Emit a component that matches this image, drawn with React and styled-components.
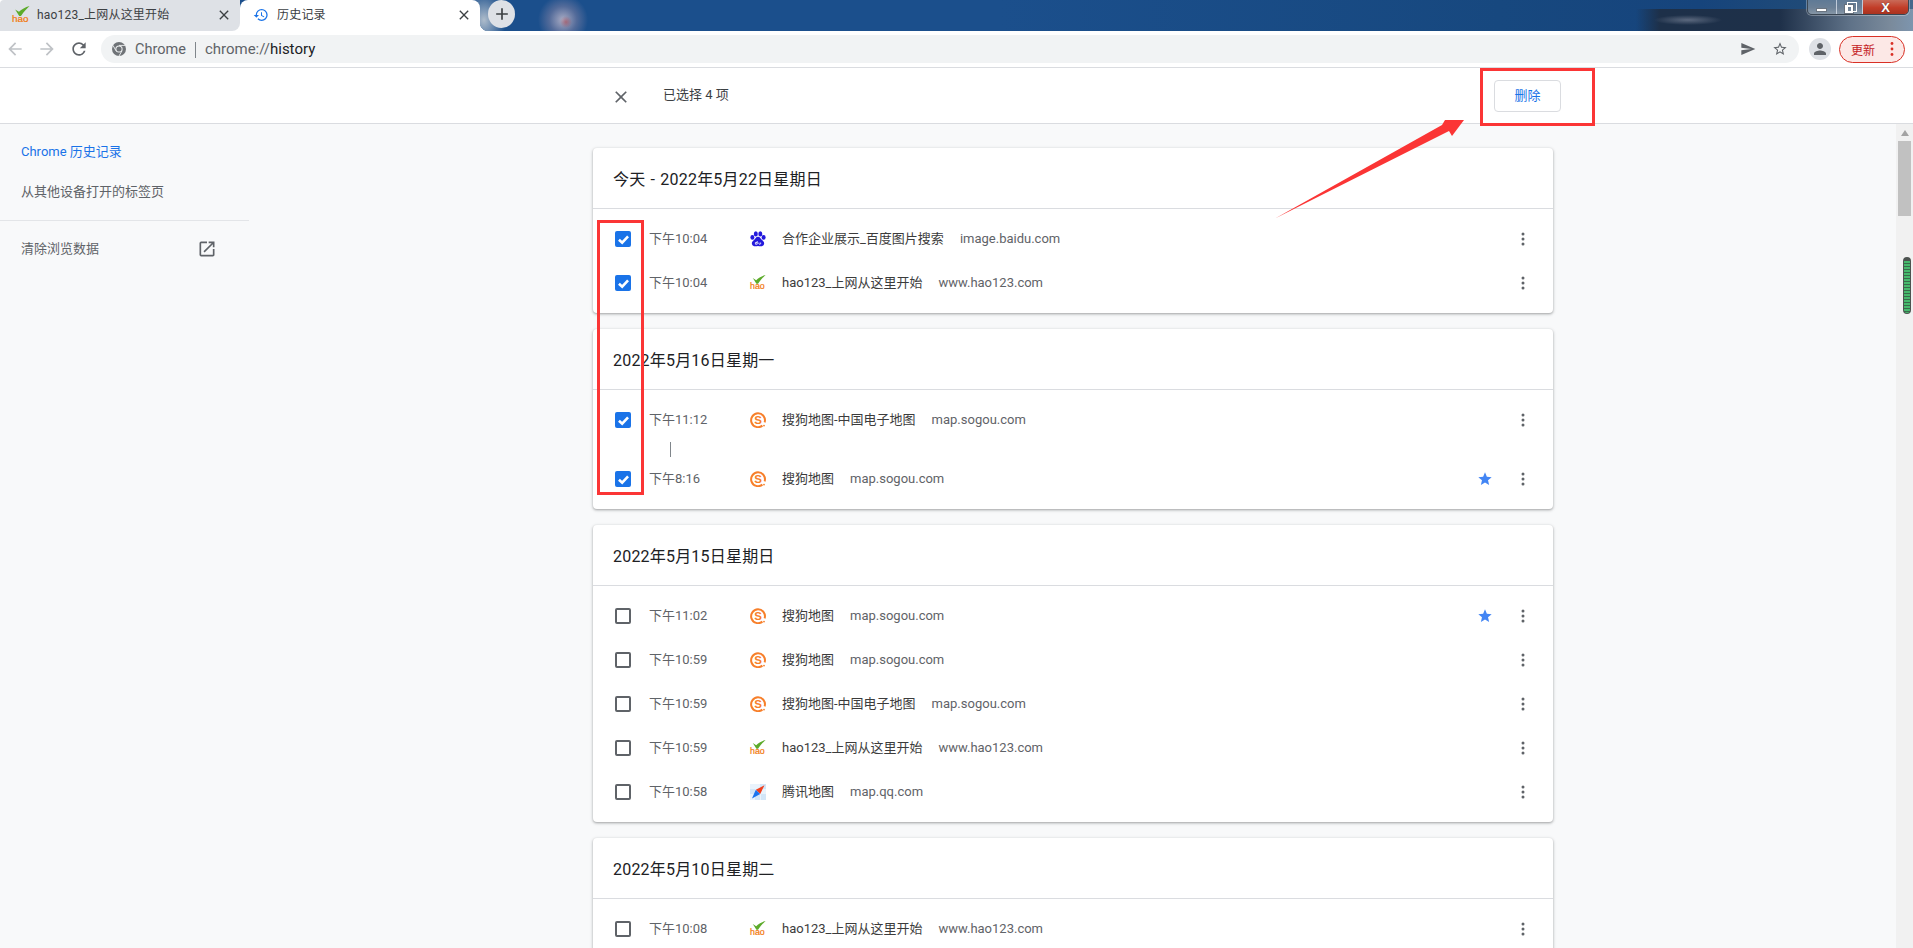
import React from "react";
import styled, { createGlobalStyle } from "styled-components";

const GlobalStyle = createGlobalStyle`
  html, body { margin: 0; padding: 0; height: 100%; overflow: hidden; background: #f8f9fa; }
  * { box-sizing: border-box; }
  body { font-family: Roboto, "Noto Sans CJK SC", sans-serif; font-size: 13px; color: #202124; }
`;

const Page = styled.div`
  position: relative;
  width: 100%;
  height: 948px;
  overflow: hidden;
  display: flex;
  flex-direction: column;
`;

/* ---------- Window chrome ---------- */
const TabStrip = styled.div`
  position: relative;
  height: 31px;
  flex: none;
  display: flex;
  align-items: flex-start;
  background:
    radial-gradient(ellipse 34px 5px at 1688px 20px, rgba(125, 135, 155, 0.65), rgba(125, 135, 155, 0) 100%),
    radial-gradient(circle 6px at 566px 22px, rgba(170, 70, 80, 0.6), rgba(170, 70, 80, 0) 100%),
    radial-gradient(circle 25px at 563px 20px, rgba(205, 195, 210, 0.8), rgba(150, 140, 170, 0.45) 55%, rgba(30, 80, 140, 0) 100%),
    radial-gradient(ellipse 22px 30px at 484px 20px, rgba(190, 200, 210, 0.9), rgba(30, 80, 140, 0) 100%),
    linear-gradient(90deg, rgba(27, 47, 72, 0) 1636px, #1d3049 1660px, #1e3049 1780px, #5f7288 1850px, #7a8a9b 1890px, #7d95ae 100%) 0 9px / 100% 22px no-repeat,
    linear-gradient(90deg, #1b4f8c 0, #1b4f8c 1000px, #17487f 1500px, #16447c 1700px, #1f4a78 1800px, #46688c 100%);
`;
const InactiveTabWrap = styled.div`
  width: 240px;
  height: 31px;
  background: #fff;
`;
const InactiveTab = styled.div`
  height: 31px;
  display: flex;
  align-items: center;
  padding: 0 8px 2px 12px;
  background: #dee1e6;
  border-radius: 4px 0 8px 0;
`;
const ActiveTab = styled.div`
  position: relative;
  width: 240px;
  height: 31px;
  display: flex;
  align-items: center;
  padding: 0 8px 2px 12px;
  background: #fff;
  border-radius: 8px 8px 0 0;
  &::after {
    content: "";
    position: absolute;
    right: -8px;
    bottom: 0;
    width: 8px;
    height: 8px;
    background: radial-gradient(circle at 100% 0, rgba(255, 255, 255, 0) 8px, #fff 8.5px);
  }
`;
const TabFavicon = styled.span`
  display: flex;
  width: 18px;
  height: 18px;
  flex: none;
  align-items: center;
  justify-content: center;
`;
const TabTitle = styled.span`
  flex: 1;
  margin-left: 7px;
  font-size: 12px;
  letter-spacing: 0.2px;
  line-height: 16px;
  color: #3c4043;
  white-space: nowrap;
`;
const TabClose = styled.svg`
  width: 16px;
  height: 16px;
  flex: none;
  fill: #3c4043;
`;
const NewTabButton = styled.div`
  width: 27px;
  height: 28px;
  margin-left: 8px;
  flex: none;
  border-radius: 50%;
  background: #dee1e6;
  display: flex;
  align-items: center;
  justify-content: center;
  svg { width: 20px; height: 20px; fill: #3c4043; }
`;
const WindowControls = styled.div`
  position: absolute;
  top: -1px;
  right: 4px;
  width: 102px;
  height: 16px;
  display: flex;
  border: 1px solid #3a4653;
  border-radius: 0 0 5px 5px;
  overflow: hidden;
  box-shadow: 0 0 0 1px rgba(255, 255, 255, 0.3);
`;
const WinButton = styled.div`
  flex: ${(p) => p.$grow};
  display: flex;
  align-items: center;
  justify-content: center;
  border-right: 1px solid rgba(230, 235, 245, 0.7);
  background: ${(p) =>
    p.$close
      ? "linear-gradient(180deg, #c96a58 0%, #c23d28 55%, #a93320 100%)"
      : "linear-gradient(180deg, #5f7a96 0%, #6b8096 55%, #8596a6 100%)"};
  color: #fff;
  font: bold 13px/1 "Liberation Sans", sans-serif;
  text-shadow: 0 0 1px #333;
  &:last-child { border-right: 0; }
`;
const MinGlyph = styled.span`
  display: block;
  width: 11px;
  height: 4px;
  margin-top: 6px;
  background: #fff;
  border: 1px solid #6a7480;
`;
const RestoreGlyph = styled.span`
  position: relative;
  display: block;
  width: 8px;
  height: 8px;
  margin-top: 3px;
  border: 2px solid #fff;
  outline: 1px solid #66707c;
  &::before {
    content: "";
    position: absolute;
    top: -5px;
    left: 0;
    width: 8px;
    height: 8px;
    border: 1px solid #fff;
  }
`;

const Toolbar = styled.div`
  height: 37px;
  flex: none;
  display: flex;
  align-items: center;
  background: #fff;
  border-bottom: 1px solid #dadce0;
  padding: 0 8px 0 5px;
`;
const NavIcon = styled.svg`
  width: 20px;
  height: 20px;
  flex: none;
  margin-right: 12px;
  fill: ${(p) => (p.$off ? "#bfc2c6" : "#5f6368")};
`;
const Omnibox = styled.div`
  width: 1698px;
  height: 28px;
  flex: none;
  display: flex;
  align-items: center;
  padding: 0 11px 0 10px;
  background: #f1f3f4;
  border-radius: 14px;
  font-size: 15px;
  color: #5f6368;
`;
const SecureChip = styled.span`
  margin-left: 8px;
  margin-top: 1px;
  padding-right: 9px;
  font-size: 14.5px;
  line-height: 16px;
  border-right: 1px solid #80868b;
`;
const UrlScheme = styled.span`
  margin-left: 9px;
`;
const UrlHost = styled.span`
  color: #202124;
`;
const OmniActions = styled.div`
  margin-left: auto;
  display: flex;
  gap: 16px;
  align-items: center;
  svg { width: 16px; height: 16px; fill: #5f6368; }
`;
const Avatar = styled.div`
  width: 22px;
  height: 22px;
  margin-left: 10px;
  flex: none;
  border-radius: 50%;
  background: #dee1e6;
  display: flex;
  align-items: flex-end;
  justify-content: center;
  svg { width: 18px; height: 18px; fill: #5f6368; margin-bottom: 2px; }
`;
const UpdatePill = styled.div`
  margin-left: 8px;
  width: 66px;
  height: 27px;
  flex: none;
  display: flex;
  align-items: center;
  padding-left: 11px;
  border: 1px solid #d93025;
  border-radius: 14px;
  background: #fce8e6;
  color: #c5221f;
  font-size: 12px;
`;
const PillDots = styled.svg`
  width: 4px;
  height: 16px;
  margin-left: 15px;
  fill: #d93025;
`;

/* ---------- Selection bar ---------- */
const SelectionBar = styled.div`
  height: 56px;
  flex: none;
  background: #fff;
  border-bottom: 1px solid #dadce0;
  padding: 0 17px 0 250px;
  display: flex;
  justify-content: center;
`;
const SelectionInner = styled.div`
  width: 960px;
  display: flex;
  align-items: center;
  font-size: 13px;
  color: #3c4043;
`;
const CloseSelection = styled.svg`
  width: 20px;
  height: 20px;
  margin-left: 18px;
  margin-top: 2px;
  fill: #5f6368;
  flex: none;
`;
const SelectedCount = styled.span`
  margin-left: 32px;
  padding-bottom: 4px;
`;
const DeleteButton = styled.button`
  margin-left: auto;
  margin-right: -8px;
  width: 67px;
  height: 32px;
  background: #fff;
  border: 1px solid #dadce0;
  border-radius: 4px;
  color: #1a73e8;
  font: inherit;
  font-size: 13px;
  padding: 0 0 3px;
`;

/* ---------- Body ---------- */
const Body = styled.div`
  flex: 1;
  min-height: 0;
  display: flex;
  background: #f8f9fa;
`;
const Sidebar = styled.nav`
  width: 250px;
  flex: none;
  padding-top: 8px;
`;
const SideItem = styled.div`
  height: 40px;
  display: flex;
  align-items: center;
  padding: 0 0 4px 21px;
  font-size: 13px;
  color: ${(p) => (p.$active ? "#1a73e8" : "#5f6368")};
`;
const SideDivider = styled.div`
  height: 1px;
  margin: 8px 1px 0 0;
  background: #e3e5e8;
`;
const ClearItem = styled.div`
  height: 55px;
  display: flex;
  align-items: center;
  justify-content: space-between;
  padding: 0 33px 0 21px;
  font-size: 13px;
  color: #5f6368;
  svg { width: 20px; height: 20px; fill: #5f6368; }
`;
const ClearLabel = styled.span`
  padding-bottom: 3px;
`;
const Content = styled.main`
  flex: 1;
  min-width: 0;
  overflow: hidden;
  display: flex;
  flex-direction: column;
  align-items: center;
  gap: 16px;
  padding-top: 24px;
`;
const Scrollbar = styled.div`
  position: relative;
  width: 17px;
  flex: none;
  background: #f1f1f1;
  padding: 6px 2px 0;
`;
const ScrollArrow = styled.div`
  width: 0;
  height: 0;
  margin: 0 auto 5px;
  border-left: 4px solid transparent;
  border-right: 4px solid transparent;
  border-bottom: 6px solid #a3a3a3;
`;
const ScrollThumb = styled.div`
  height: 75px;
  background: #c1c1c1;
`;
const ScrollMarker = styled.div`
  position: absolute;
  top: 133px;
  left: 7px;
  width: 8px;
  height: 57px;
  border-radius: 4px;
  border: 1px solid #4d5350;
  border-top-width: 4px;
  background: repeating-linear-gradient(180deg, #46b96c 0 2px, #3a6b4c 2px 3px);
`;

const Card = styled.section`
  width: 960px;
  flex: none;
  background: #fff;
  border-radius: 4px;
  box-shadow: 0 1px 2px rgba(60, 64, 67, 0.3), 0 1px 3px 1px rgba(60, 64, 67, 0.15);
`;
const CardHeader = styled.h2`
  margin: 0;
  height: 61px;
  padding: 0 20px;
  display: flex;
  align-items: center;
  border-bottom: 1px solid #dadce0;
  font-size: 16px;
  font-weight: 400;
  letter-spacing: 0.2px;
  word-spacing: 1px;
  white-space: pre;
  color: #202124;
`;
const RowList = styled.div`
  padding: 8px 0;
`;
const Row = styled.div`
  height: 44px;
  display: flex;
  align-items: center;
  padding: 0 22px;
  font-size: 13px;
`;
const TimeGap = styled.div`
  height: 15px;
  margin-left: 77px;
  border-left: 1px solid #80868b;
`;
const CheckBox = styled.span`
  width: 16px;
  height: 16px;
  flex: none;
  margin-right: 18px;
  border-radius: 2px;
  display: flex;
  align-items: center;
  justify-content: center;
  background: ${(p) => (p.$checked ? "#1a73e8" : "#fff")};
  border: ${(p) => (p.$checked ? "0" : "2px solid #5f6368")};
  svg { width: 13px; height: 13px; fill: none; stroke: #fff; stroke-width: 2.4; }
`;
const Time = styled.span`
  width: 101px;
  flex: none;
  padding-bottom: 3px;
  color: #5f6368;
`;
const Favicon = styled.span`
  width: 16px;
  height: 16px;
  flex: none;
  margin-right: 16px;
  display: flex;
`;
const Title = styled.span`
  padding-bottom: 3px;
  color: #3c3c3c;
  white-space: nowrap;
`;
const Domain = styled.span`
  margin-left: 16px;
  padding-bottom: 1px;
  color: #5f6368;
  white-space: nowrap;
`;
const StarIcon = styled.svg`
  width: 16px;
  height: 16px;
  margin-left: auto;
  flex: none;
  fill: #4285f4;
`;
const MoreIcon = styled.svg`
  width: 16px;
  height: 16px;
  flex: none;
  margin-left: ${(p) => (p.$afterStar ? "22px" : "auto")};
  fill: #5f6368;
`;
const HaoSvg = styled.svg`
  overflow: visible;
  flex: none;
`;

/* ---------- Annotations laid over the page ---------- */
const DeleteFrame = styled.div`
  position: absolute;
  left: 1480px;
  top: 68px;
  width: 115px;
  height: 58px;
  border: 3px solid #fb3535;
`;
const SelectionFrame = styled.div`
  position: absolute;
  left: 597px;
  top: 220px;
  width: 47px;
  height: 275px;
  border: 3px solid #fb3535;
`;
const ArrowMark = styled.svg`
  position: absolute;
  left: 1270px;
  top: 115px;
  width: 200px;
  height: 110px;
  fill: #fb3535;
`;

/* ---------- Icons ---------- */
const Hao = ({ size = 16 }) => (
  <HaoSvg viewBox="0 0 16 16" width={size} height={size}>
    <path d="M2.8 3 L6.2 5.2 C8.6 3 11.6 1 15.6 0 C13 2.6 10.4 5.2 8 8.8 L6.4 8.8 Z" fill="#5cab2a" />
    <text x="0" y="14.2" fontSize="8.8" fontFamily="Liberation Sans, sans-serif" stroke="#f2780c" strokeWidth="0.2" fill="#f2780c">hao</text>
  </HaoSvg>
);
const Baidu = () => (
  <svg viewBox="0 0 16 16" width="16" height="16" fill="#2319dc">
    <ellipse cx="2.4" cy="6.4" rx="2" ry="2.4" />
    <ellipse cx="5.8" cy="2.9" rx="2" ry="2.6" />
    <ellipse cx="10.3" cy="2.9" rx="2" ry="2.6" />
    <ellipse cx="13.6" cy="6.4" rx="2" ry="2.4" />
    <path d="M8 5.8c-2.2 0-2.6 2-4 3.1C2.7 10 1.4 11.2 2 13.3c.5 1.7 2.2 2.2 3.6 2 .9-.1 1.6-.4 2.4-.4s1.5.3 2.4.4c1.4.2 3.1-.3 3.6-2 .6-2.1-.7-3.3-2-4.4-1.4-1.1-1.8-3.1-4-3.1z" />
    <path d="M7.2 10v3.2H5.4v-1.7h1.8M8.9 11.5v1.4c0 .5 1.7.5 1.7 0v-1.4" fill="none" stroke="#fff" strokeWidth="0.8" />
  </svg>
);
const Sogou = () => (
  <svg viewBox="0 0 16 16" width="16" height="16">
    <path d="M12.4 13.6A6.9 6.9 0 1 1 14.6 10.4" fill="none" stroke="#f77f2a" strokeWidth="2" />
    <text x="8" y="12.2" textAnchor="middle" fontSize="11.5" fontWeight="700" fontFamily="Liberation Sans, sans-serif" fill="#f77f2a">S</text>
    <circle cx="14" cy="13.6" r="0.9" fill="#f77f2a" />
  </svg>
);
const Tencent = () => (
  <svg viewBox="0 0 16 16" width="16" height="16">
    <rect width="16" height="16" fill="#e9f3fc" />
    <rect x="0" y="5" width="5" height="5" fill="#d2e6f8" />
    <rect x="10" y="0" width="6" height="5" fill="#d2e6f8" />
    <rect x="5" y="10" width="5" height="6" fill="#d2e6f8" />
    <rect x="11" y="10" width="5" height="6" fill="#d2e6f8" />
    <path d="M14.5 1.2 L10.2 10 L5.8 5.8 Z" fill="#f0401f" />
    <path d="M2 14.6 L5.8 5.8 L10.2 10 Z" fill="#1a74ee" />
  </svg>
);
const FAVICONS = { hao: <Hao />, baidu: <Baidu />, sogou: <Sogou />, qq: <Tencent /> };

const CLOSE = "M19 6.41L17.59 5 12 10.59 6.41 5 5 6.41 10.59 12 5 17.59 6.41 19 12 13.41 17.59 19 19 17.59 13.41 12z";

const Dots = () => (
  <>
    <circle cx="8" cy="3" r="1.5" />
    <circle cx="8" cy="8" r="1.5" />
    <circle cx="8" cy="13" r="1.5" />
  </>
);

const HistoryRow = ({ item }) => (
  <Row>
    <CheckBox $checked={item.checked}>
      {item.checked && (
        <svg viewBox="0 0 12 12"><path d="M1.8 6.2 L4.8 9 L10.2 3.2" /></svg>
      )}
    </CheckBox>
    <Time>{item.time}</Time>
    <Favicon>{FAVICONS[item.icon]}</Favicon>
    <Title>{item.title}</Title>
    <Domain>{item.domain}</Domain>
    {item.starred && (
      <StarIcon viewBox="0 0 24 24">
        <path d="M12 17.27L18.18 21l-1.64-7.03L22 9.24l-7.19-.61L12 2 9.19 8.63 2 9.24l5.46 4.73L5.82 21z" />
      </StarIcon>
    )}
    <MoreIcon viewBox="0 0 16 16" $afterStar={item.starred}><Dots /></MoreIcon>
  </Row>
);

const hao = { icon: "hao", title: "hao123_上网从这里开始", domain: "www.hao123.com" };
const map = { icon: "sogou", title: "搜狗地图", domain: "map.sogou.com" };
const mapCn = { icon: "sogou", title: "搜狗地图-中国电子地图", domain: "map.sogou.com" };

const GROUPS = [
  {
    date: "今天 - 2022年5月22日星期日",
    rows: [
      { time: "下午10:04", checked: true, icon: "baidu", title: "合作企业展示_百度图片搜索", domain: "image.baidu.com" },
      { time: "下午10:04", checked: true, ...hao },
    ],
  },
  {
    date: "2022年5月16日星期一",
    rows: [
      { time: "下午11:12", checked: true, ...mapCn },
      { gap: true },
      { time: "下午8:16", checked: true, starred: true, ...map },
    ],
  },
  {
    date: "2022年5月15日星期日",
    rows: [
      { time: "下午11:02", starred: true, ...map },
      { time: "下午10:59", ...map },
      { time: "下午10:59", ...mapCn },
      { time: "下午10:59", ...hao },
      { time: "下午10:58", icon: "qq", title: "腾讯地图", domain: "map.qq.com" },
    ],
  },
  {
    date: "2022年5月10日星期二",
    rows: [{ time: "下午10:08", ...hao }],
  },
];

export default function App() {
  return (
    <Page>
      <GlobalStyle />
      <TabStrip>
        <InactiveTabWrap>
          <InactiveTab>
            <TabFavicon><Hao size={18} /></TabFavicon>
            <TabTitle>hao123_上网从这里开始</TabTitle>
            <TabClose viewBox="0 0 24 24"><path d={CLOSE} /></TabClose>
          </InactiveTab>
        </InactiveTabWrap>
        <ActiveTab>
          <TabFavicon>
            <svg viewBox="0 0 24 24" width="16" height="16" fill="#1a73e8">
              <path d="M13 3a9 9 0 00-9 9H1l3.89 3.89.07.14L9 12H6c0-3.87 3.13-7 7-7s7 3.13 7 7-3.13 7-7 7c-1.93 0-3.68-.79-4.94-2.06l-1.42 1.42A8.954 8.954 0 0013 21a9 9 0 000-18zm-1 5v5l4.28 2.54.72-1.21-3.5-2.08V8H12z" />
            </svg>
          </TabFavicon>
          <TabTitle>历史记录</TabTitle>
          <TabClose viewBox="0 0 24 24"><path d={CLOSE} /></TabClose>
        </ActiveTab>
        <NewTabButton>
          <svg viewBox="0 0 24 24"><path d="M19 13h-6v6h-2v-6H5v-2h6V5h2v6h6v2z" /></svg>
        </NewTabButton>
        <WindowControls>
          <WinButton $grow={29}><MinGlyph /></WinButton>
          <WinButton $grow={27}><RestoreGlyph /></WinButton>
          <WinButton $grow={47} $close>X</WinButton>
        </WindowControls>
      </TabStrip>

      <Toolbar>
        <NavIcon $off viewBox="0 0 24 24"><path d="M20 11H7.83l5.59-5.59L12 4l-8 8 8 8 1.41-1.41L7.83 13H20v-2z" /></NavIcon>
        <NavIcon $off viewBox="0 0 24 24"><path d="M12 4l-1.41 1.41L16.17 11H4v2h12.17l-5.58 5.59L12 20l8-8z" /></NavIcon>
        <NavIcon viewBox="0 0 24 24"><path d="M17.65 6.35A7.958 7.958 0 0012 4c-4.42 0-7.99 3.58-7.99 8s3.57 8 7.99 8c3.73 0 6.84-2.55 7.73-6h-2.08A5.99 5.99 0 0112 18c-3.31 0-6-2.69-6-6s2.69-6 6-6c1.66 0 3.14.69 4.22 1.78L13 11h7V4l-2.35 2.35z" /></NavIcon>
        <Omnibox>
          <svg viewBox="0 0 16 16" width="16" height="16" style={{ flex: "none" }}>
            <circle cx="8" cy="8" r="7" fill="#6f7377" />
            <circle cx="8" cy="8" r="3.6" fill="#f1f3f4" />
            <circle cx="8" cy="8" r="2.6" fill="#6f7377" />
            <path d="M8 4.4h6.2M5 9.8 2 4.4M11 9.8 8 15" stroke="#f1f3f4" strokeWidth="0.9" fill="none" />
          </svg>
          <SecureChip>Chrome</SecureChip>
          <UrlScheme>chrome://<UrlHost>history</UrlHost></UrlScheme>
          <OmniActions>
            <svg viewBox="0 0 24 24"><path d="M2.01 21L23 12 2.01 3 2 10l15 2-15 2z" /></svg>
            <svg viewBox="0 0 24 24"><path d="M22 9.24l-7.19-.62L12 2 9.19 8.63 2 9.24l5.46 4.73L5.82 21 12 17.27 18.18 21l-1.63-7.03L22 9.24zM12 15.4l-3.76 2.27 1-4.28-3.32-2.88 4.38-.38L12 6.1l1.71 4.04 4.38.38-3.32 2.88 1 4.28L12 15.4z" /></svg>
          </OmniActions>
        </Omnibox>
        <Avatar>
          <svg viewBox="0 0 24 24"><path d="M12 12c2.21 0 4-1.79 4-4s-1.79-4-4-4-4 1.79-4 4 1.79 4 4 4zm0 2c-2.67 0-8 1.34-8 4v2h16v-2c0-2.66-5.33-4-8-4z" /></svg>
        </Avatar>
        <UpdatePill>
          更新
          <PillDots viewBox="0 0 4 16">
            <circle cx="2" cy="2.5" r="1.4" />
            <circle cx="2" cy="8" r="1.4" />
            <circle cx="2" cy="13.5" r="1.4" />
          </PillDots>
        </UpdatePill>
      </Toolbar>

      <SelectionBar>
        <SelectionInner>
          <CloseSelection viewBox="0 0 24 24"><path d={CLOSE} /></CloseSelection>
          <SelectedCount>已选择 4 项</SelectedCount>
          <DeleteButton>删除</DeleteButton>
        </SelectionInner>
      </SelectionBar>

      <Body>
        <Sidebar>
          <SideItem $active>Chrome 历史记录</SideItem>
          <SideItem>从其他设备打开的标签页</SideItem>
          <SideDivider />
          <ClearItem>
            <ClearLabel>清除浏览数据</ClearLabel>
            <svg viewBox="0 0 24 24"><path d="M19 19H5V5h7V3H5a2 2 0 00-2 2v14a2 2 0 002 2h14c1.1 0 2-.9 2-2v-7h-2v7zM14 3v2h3.59l-9.83 9.83 1.41 1.41L19 6.41V10h2V3h-7z" /></svg>
          </ClearItem>
        </Sidebar>
        <Content>
          {GROUPS.map((group) => (
            <Card key={group.date}>
              <CardHeader>{group.date}</CardHeader>
              <RowList>
                {group.rows.map((item, i) =>
                  item.gap ? <TimeGap key={i} /> : <HistoryRow key={i} item={item} />
                )}
              </RowList>
            </Card>
          ))}
        </Content>
        <Scrollbar>
          <ScrollArrow />
          <ScrollThumb />
          <ScrollMarker />
        </Scrollbar>
      </Body>

      <DeleteFrame />
      <SelectionFrame />
      <ArrowMark viewBox="0 0 200 110">
        <polygon points="5,103.5 172,10 175,5 194,5 182,21 179,16" />
      </ArrowMark>
    </Page>
  );
}
